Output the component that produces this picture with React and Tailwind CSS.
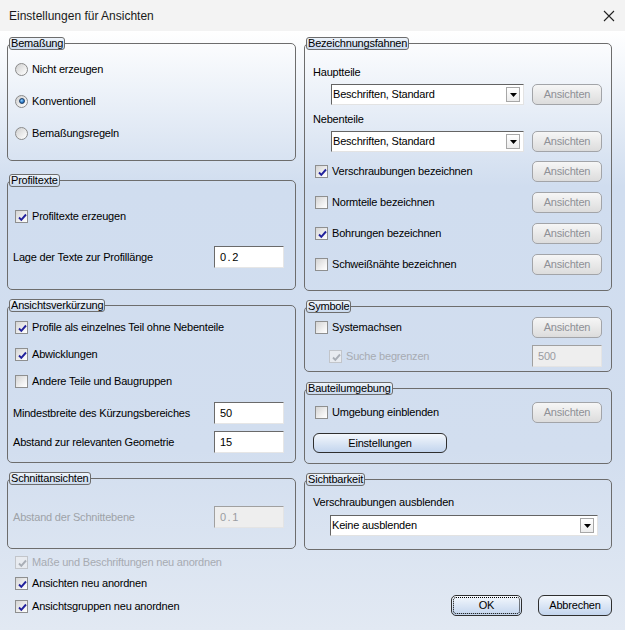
import { useState } from "react";

const font = { fontFamily: '"Liberation Sans", Arial, sans-serif' };

function CheckMark({ disabled }) {
  return (
    <svg width="9" height="9" viewBox="0 0 9 9" className="absolute left-[2px] top-[2px]">
      <path d="M1 4.5 L3.3 6.8 L8 1.5" fill="none" stroke={disabled ? "#a9aeb6" : "#21219c"} strokeWidth="1.9" />
    </svg>
  );
}

function Check({ checked, disabled, label, className = "" }) {
  return (
    <div className={"flex items-center h-4 " + className}>
      <div
        className={
          "relative w-[13px] h-[13px] border " +
          (disabled
            ? "border-[#c2c5ca] bg-[#e8ebf0]"
            : "border-[#8e8f8f] bg-[linear-gradient(135deg,#d4d4d4_0%,#f4f4f4_70%,#ffffff_100%)]")
        }
      >
        {checked && <CheckMark disabled={disabled} />}
      </div>
      <span className={"ml-[4px] " + (disabled ? "text-[#a7abb2]" : "text-black")}>{label}</span>
    </div>
  );
}

function Radio({ checked, label }) {
  return (
    <div className="flex items-center h-4">
      <div className="relative w-[13px] h-[13px] rounded-full border border-[#8a8a8a] bg-[linear-gradient(135deg,#cfcfcf_0%,#f2f2f2_70%,#ffffff_100%)]">
        {checked && (
          <div className="absolute left-[2.5px] top-[2.5px] w-[6px] h-[6px] rounded-full border border-[#1d3f68] bg-[radial-gradient(circle_at_40%_35%,#8fd0ff_0%,#2a78c7_60%,#15477e_100%)]" />
        )}
      </div>
      <span className="ml-[4px]">{label}</span>
    </div>
  );
}

function Group({ title, className = "", children }) {
  return (
    <fieldset className={"rounded-[5px] border border-[#6d6d6d] " + className}>
      <legend className="ml-px h-[13px] leading-[11px] px-[1px] rounded-[3px] border border-[#6d6d6d] bg-[linear-gradient(to_bottom,#edf3fa,#cbdaee)]">
        {title}
      </legend>
      {children}
    </fieldset>
  );
}

function Ansichten() {
  return (
    <div className="w-[70px] h-[21px] flex items-center justify-center rounded-[5px] border border-[#a2a4a8] bg-[linear-gradient(to_bottom,#f6f6f6,#dcdcdc)] text-[#8e9096]">
      Ansichten
    </div>
  );
}

function Field({ value, disabled, className = "" }) {
  return (
    <div
      className={
        "w-[70px] h-[22px] flex items-center pl-[5px] border-t border-l border-r border-b " +
        (disabled
          ? "bg-[#eeeeee] border-t-[#a0a0a0] border-l-[#a0a0a0] border-r-[#e4e4e4] border-b-[#e4e4e4] text-[#9a9ca2] "
          : "bg-white border-t-[#6a6a6a] border-l-[#6a6a6a] border-r-[#e6e6e6] border-b-[#e6e6e6] ") +
        className
      }
    >
      {value}
    </div>
  );
}

function Select({ value, className = "" }) {
  return (
    <div className={"h-[21px] flex items-center bg-white border border-t-[#646464] border-l-[#646464] border-r-[#e3e3e3] border-b-[#e3e3e3] " + className}>
      <span className="flex-1 pl-[1px]">{value}</span>
      <div className="w-[14px] h-[15px] mr-[3px] flex items-center justify-center border border-[#a7a7a7] bg-[linear-gradient(to_bottom,#ffffff,#ececec)]">
        <svg width="7" height="4" viewBox="0 0 7 4">
          <path d="M0 0 H7 L3.5 4 Z" fill="#000" />
        </svg>
      </div>
    </div>
  );
}

function CheckRow({ checked, label }) {
  return (
    <div className="flex items-center justify-between h-[21px] pl-[10px] pr-[9px]">
      <Check checked={checked} label={label} />
      <Ansichten />
    </div>
  );
}

export default function App() {
  const [sel] = useState("Konventionell");
  return (
    <div style={font} className="w-[625px] h-[630px] text-[11px] tracking-[-0.2px] text-black overflow-hidden">
      {/* titel */}
      <div className="h-[31px] bg-[#f3f3f3] flex items-center justify-between pl-[9px] pr-[10px]">
        <span className="text-[12px] tracking-normal text-[#1a1a1a]">Einstellungen für Ansichten</span>
        <svg width="12" height="12" viewBox="0 0 12 12">
          <path d="M1 1 L11 11 M11 1 L1 11" stroke="#222" strokeWidth="1.1" />
        </svg>
      </div>

      <div className="h-[599px] bg-[linear-gradient(to_bottom,#ffffff_0%,#d0ddef_26%,#d2deef_70%,#e2e9f3_100%)] flex gap-[8px] pl-[7px] pt-[6px]">
        {/* linke spalte */}
        <div className="w-[289px] flex flex-col">
          <Group title="Bemaßung" className="h-[124px]">
            <div className="flex flex-col gap-[16px] pt-[11px] pl-[7px]">
              {["Nicht erzeugen", "Konventionell", "Bemaßungsregeln"].map((r) => (
                <Radio key={r} label={r} checked={sel === r} />
              ))}
            </div>
          </Group>

          <Group title="Profiltexte" className="h-[116px] mt-[13px]">
            <div className="flex flex-col pt-[21px] pl-[7px] pr-[11px]">
              <Check checked label="Profiltexte erzeugen" />
              <div className="flex items-center justify-between mt-[22px]">
                <span className="-ml-[2px]">Lage der Texte zur Profillänge</span>
                <Field value="0.2" className="tracking-[1.5px]" />
              </div>
            </div>
          </Group>

          <Group title="Ansichtsverkürzung" className="h-[164px] mt-[9px]">
            <div className="flex flex-col pt-[7px] pl-[7px] pr-[11px]">
              <Check checked label="Profile als einzelnes Teil ohne Nebenteile" />
              <Check checked label="Abwicklungen" className="mt-[11px]" />
              <Check label="Andere Teile und Baugruppen" className="mt-[11px]" />
              <div className="flex items-center justify-between mt-[13px]">
                <span className="-ml-[2px]">Mindestbreite des Kürzungsbereiches</span>
                <Field value="50" />
              </div>
              <div className="flex items-center justify-between mt-[7px]">
                <span className="-ml-[2px]">Abstand zur relevanten Geometrie</span>
                <Field value="15" />
              </div>
            </div>
          </Group>

          <Group title="Schnittansichten" className="h-[77px] mt-[9px]">
            <div className="flex items-center justify-between pt-[21px] pl-[5px] pr-[11px]">
              <span className="text-[#9ea2a8]">Abstand der Schnittebene</span>
              <Field value="0.1" disabled className="tracking-[1.5px]" />
            </div>
          </Group>

          <div className="flex flex-col pl-[8px]">
            <Check checked disabled label="Maße und Beschriftungen neu anordnen" className="mt-[5px]" />
            <Check checked label="Ansichten neu anordnen" className="mt-[5px]" />
            <Check checked label="Ansichtsgruppen neu anordnen" className="mt-[7px]" />
          </div>
        </div>

        {/* rechte spalte */}
        <div className="w-[308px] flex flex-col">
          <Group title="Bezeichnungsfahnen" className="h-[254px]">
            <div className="flex flex-col pt-[15px]">
              <div className="h-[14px] flex items-center pl-[8px]">Hauptteile</div>
              <div className="flex items-center justify-between mt-[5px] pl-[26px] pr-[9px]">
                <Select value="Beschriften, Standard" className="w-[193px]" />
                <Ansichten />
              </div>
              <div className="h-[14px] flex items-center pl-[8px] mt-[7px]">Nebenteile</div>
              <div className="flex items-center justify-between mt-[5px] pl-[26px] pr-[9px]">
                <Select value="Beschriften, Standard" className="w-[193px]" />
                <Ansichten />
              </div>
              <div className="flex flex-col gap-[10px] mt-[9px]">
                <CheckRow checked label="Verschraubungen bezeichnen" />
                <CheckRow label="Normteile bezeichnen" />
                <CheckRow checked label="Bohrungen bezeichnen" />
                <CheckRow label="Schweißnähte bezeichnen" />
              </div>
            </div>
          </Group>

          <Group title="Symbole" className="h-[72px] mt-[9px]">
            <div className="flex flex-col pt-[4px]">
              <CheckRow label="Systemachsen" />
              <div className="flex items-center justify-between mt-[7px] pl-[24px] pr-[9px]">
                <Check checked disabled label="Suche begrenzen" />
                <Field value="500" disabled className="text-[#6f7278]" />
              </div>
            </div>
          </Group>

          <Group title="Bauteilumgebung" className="h-[82px] mt-[10px]">
            <div className="flex flex-col pt-[7px]">
              <CheckRow label="Umgebung einblenden" />
              <div className="mt-[10px] ml-[8px] w-[134px] h-[20px] flex items-center justify-center rounded-[6px] border border-[#2f2f2f] bg-[linear-gradient(to_bottom,#f4f8fd_0%,#dbe6f5_50%,#c3d5ee_100%)]">
                Einstellungen
              </div>
            </div>
          </Group>

          <Group title="Sichtbarkeit" className="h-[77px] mt-[9px]">
            <div className="flex flex-col pt-[9px]">
              <div className="h-[14px] flex items-center pl-[8px]">Verschraubungen ausblenden</div>
              <div className="mt-[6px] pl-[25px]">
                <Select value="Keine ausblenden" className="w-[268px]" />
              </div>
            </div>
          </Group>

          <div className="flex justify-end gap-[16px] mt-[45px]">
            <div className="w-[71px] h-[21px] p-[1px] rounded-[5px] border border-[#2f2f2f] bg-[linear-gradient(to_bottom,#f4f8fd_0%,#dbe6f5_50%,#c3d5ee_100%)]">
              <div className="w-full h-full flex items-center justify-center rounded-[3px] border border-dotted border-[#000]">
                OK
              </div>
            </div>
            <div className="w-[74px] h-[21px] flex items-center justify-center rounded-[6px] border border-[#2f2f2f] bg-[linear-gradient(to_bottom,#f4f8fd_0%,#dbe6f5_50%,#c3d5ee_100%)]">
              Abbrechen
            </div>
          </div>
        </div>
      </div>
    </div>
  );
}
